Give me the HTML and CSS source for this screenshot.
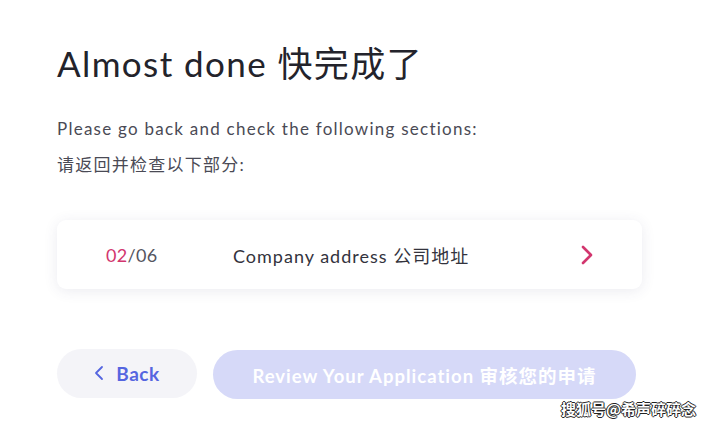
FILE: index.html
```html
<!DOCTYPE html>
<html lang="en">
<head>
  <meta charset="UTF-8" />
  <title>Almost done</title>
  <link rel="stylesheet" href="styles.css">
</head>
<body>
  <div class="page">
    <h1 class="title">Almost done 快完成了</h1>
    <p class="note">Please go back and check the following sections:</p>
    <p class="note">请返回并检查以下部分:</p>

    <!-- Sections to review -->
    <div class="card">
      <span class="step"><span class="current">02</span>/06</span>
      <span class="section-name">Company address 公司地址</span>
      <svg class="chevron" width="14" height="22" viewBox="0 0 14 22">
        <path d="M3 3 L11 11 L3 19" fill="none" stroke="#d2366e" stroke-width="2.6" stroke-linecap="round" stroke-linejoin="round"/>
      </svg>
    </div>

    <div class="actions">
      <button class="btn-back">
        <svg width="10" height="16" viewBox="0 0 10 16">
          <path d="M8 2 L2 8 L8 14" fill="none" stroke="#5565e0" stroke-width="1.8" stroke-linecap="round" stroke-linejoin="round"/>
        </svg>
        Back
      </button>
      <button class="btn-review">Review Your Application 审核您的申请</button>
    </div>
  </div>
  <div class="watermark">搜狐号@希声碎碎念</div>
</body>
</html>
```

FILE: styles.css
```css
body {
  margin: 0;
  background: #ffffff;
  font-family: Lato, "Noto Sans CJK SC", sans-serif;
  color: #2a2a33;
}

.page {
  padding: 36px 0 0 57px;
  width: 585px;
}

.title {
  margin: 0 0 31px;
  font-size: 35px;
  font-weight: 400;
  letter-spacing: 1.4px;
  color: #23232b;
}

.note {
  margin: 0 0 14px;
  font-size: 17px;
  color: #4a4a55;
  line-height: 22px;
  letter-spacing: 1.25px;
}

.card {
  margin-top: 44px;
  height: 69px;
  background: white;
  border-radius: 9px;
  box-shadow: 0 2px 14px rgba(60, 60, 110, 0.1);
  display: flex;
  align-items: center;
  padding: 0 48px 0 49px;
}

.step {
  font-size: 18px;
  color: #55555f;
  width: 127px;
  letter-spacing: 0.3px;
}

.current {
  color: #d2366e;
}

.section-name {
  flex: 1;
  font-size: 18px;
  color: #33333d;
  letter-spacing: 1px;
}

.actions {
  margin-top: 58px;
  display: flex;
  align-items: center;
  gap: 16px;
}

.btn-back {
  width: 140px;
  height: 49px;
  border: none;
  border-radius: 25px;
  background: #f4f4f8;
  color: #5565e0;
  font-family: Lato, sans-serif;
  font-weight: 700;
  font-size: 19px;
  letter-spacing: 0.5px;
  display: flex;
  align-items: center;
  justify-content: center;
  gap: 12px;
  padding-right: 6px;
  cursor: pointer;
}

.btn-review {
  width: 423px;
  height: 49px;
  margin-top: 3px;
  border: none;
  border-radius: 25px;
  background: #d6d9f8;
  color: white;
  font-family: Lato, "Noto Sans CJK SC", sans-serif;
  font-weight: 700;
  font-size: 18.5px;
  letter-spacing: 1px;
  cursor: pointer;
}

.watermark {
  position: absolute;
  left: 561px;
  top: 398px;
  font-family: "Noto Sans CJK SC", sans-serif;
  font-size: 15px;
  font-weight: 700;
  color: white;
  text-shadow: 1px 0 0 #222, -1px 0 0 #222, 0 1px 0 #222, 0 -1px 0 #222;
}
```
